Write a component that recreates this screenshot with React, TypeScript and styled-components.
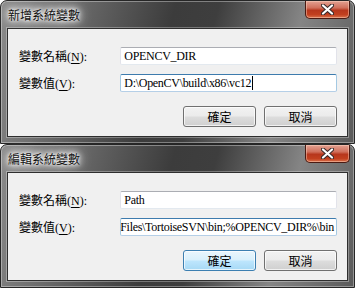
import styled, { createGlobalStyle } from "styled-components";

const GlobalStyle = createGlobalStyle`
  body {
    margin: 0;
    background: #ffffff;
    font-family: "Liberation Serif", "Noto Sans CJK TC", serif;
  }
`

type Field = { label: string; key: string; value: string; focused?: boolean; caret?: boolean; scrolled?: boolean }

type DialogProps = {
  title: string
  fields: Field[]
  defaultFocused?: boolean
}

function CloseIcon() {
  return (
    <svg width="13" height="11" viewBox="0 0 13 11">
      <path d="M2 1.5 L11 9.5 M11 1.5 L2 9.5" stroke="#3a2a2a" strokeWidth="4.2" strokeLinecap="round" />
      <path d="M2 1.5 L11 9.5 M11 1.5 L2 9.5" stroke="#ffffff" strokeWidth="2.2" strokeLinecap="round" />
    </svg>
  )
}

function Dialog({ title, fields, defaultFocused }: DialogProps) {
  return (
    <Window>
      <TitleBar>
        <Title>{title}</Title>
        <CloseButton><CloseIcon /></CloseButton>
      </TitleBar>
      <Client>
        {fields.map((f) => (
          <Row key={f.key}>
            <Label>
              {f.label}(<u>{f.key}</u>):
            </Label>
            <TextBox $focused={f.focused} $scrolled={f.scrolled}>
              <TextValue>
                {f.value}
                {f.caret && <Caret />}
              </TextValue>
            </TextBox>
          </Row>
        ))}
        <Buttons>
          <Button $default={defaultFocused}>確定</Button>
          <Button>取消</Button>
        </Buttons>
      </Client>
    </Window>
  )
}

export default function App() {
  return (
    <>
      <GlobalStyle />
      <Page>
        <Dialog
          title="新增系統變數"
          fields={[
            { label: "變數名稱", key: "N", value: "OPENCV_DIR" },
            { label: "變數值", key: "V", value: "D:\\OpenCV\\build\\x86\\vc12", focused: true, caret: true },
          ]}
        />
        <Dialog
          title="編輯系統變數"
          defaultFocused
          fields={[
            { label: "變數名稱", key: "N", value: "Path" },
            { label: "變數值", key: "V", value: "Files\\TortoiseSVN\\bin;%OPENCV_DIR%\\bin", focused: true, scrolled: true },
          ]}
        />
      </Page>
    </>
  )
}

const Page = styled.div`
  display: flex;
  flex-direction: column;
  width: 357px;
  height: 289px;
  overflow: hidden;
`

const Window = styled.div`
  width: 355px;
  height: 144px;
  box-sizing: border-box;
  flex-shrink: 0;
  border: 1px solid #262626;
  border-radius: 7px 7px 0 0;
  background: linear-gradient(105deg, #8c8c8c 0%, #6e6e6e 18%, #3c3c3c 45%, #3e3e3e 56%, #858585 78%, #5a5a5a 100%);
  box-shadow: inset 0 0 0 1px rgba(255, 255, 255, 0.35);
  display: flex;
  flex-direction: column;
`

const TitleBar = styled.div`
  height: 27px;
  display: flex;
  justify-content: space-between;
  align-items: flex-start;
  padding-left: 7px;
  padding-right: 4px;
`

const Title = styled.div`
  margin-top: 7px;
  font-family: "Noto Sans CJK TC", sans-serif;
  font-size: 12px;
  line-height: 14px;
  color: #111;
  text-shadow: 0 0 3px #fff, 0 0 6px #fff, 0 0 10px #fff, 0 0 14px rgba(255, 255, 255, 0.9);
`

const CloseButton = styled.div`
  width: 45px;
  height: 18px;
  box-sizing: border-box;
  border: 1px solid #4a1a12;
  border-top: none;
  border-radius: 0 0 5px 5px;
  background: linear-gradient(180deg, #e3a192 0%, #d0705c 40%, #b7361c 55%, #c2401f 80%, #d9714c 100%);
  box-shadow: inset 0 0 0 1px rgba(255, 220, 200, 0.45);
  display: flex;
  align-items: center;
  justify-content: center;
`

const Client = styled.div`
  flex: 1;
  margin: 0 6px 6px 6px;
  border: 1px solid #2e2e2e;
  box-shadow: 0 0 0 1px rgba(255, 255, 255, 0.3);
  background: #f0f0f0;
  display: flex;
  flex-direction: column;
  gap: 9px;
  padding: 18px 10px 0 11px;
`

const Row = styled.div`
  display: flex;
  align-items: center;
  height: 18px;
`

const Label = styled.div`
  width: 102px;
  font-size: 12px;
  color: #000;
  u {
    text-decoration-thickness: 1px;
    text-underline-offset: 2px;
  }
`

const TextBox = styled.div<{ $focused?: boolean; $scrolled?: boolean }>`
  width: 218px;
  height: 18px;
  box-sizing: border-box;
  background: #fff;
  border: 1px solid ${(p) => (p.$focused ? "#a4c9e3" : "#e2e3ea")};
  border-top-color: ${(p) => (p.$focused ? "#3d7bad" : "#abadb3")};
  border-bottom-color: ${(p) => (p.$focused ? "#b5cfe7" : "#e3e9ef")};
  border-radius: 2px;
  display: flex;
  align-items: center;
  justify-content: ${(p) => (p.$scrolled ? "flex-end" : "flex-start")};
  overflow: hidden;
  padding: 0 2px 0 3px;
`

const TextValue = styled.span`
  font-family: "Liberation Serif", serif;
  font-size: 12px;
  letter-spacing: -0.3px;
  line-height: 16px;
  color: #000;
  white-space: nowrap;
  display: flex;
  align-items: center;
  flex-shrink: 0;
`

const Caret = styled.span`
  display: inline-block;
  width: 1px;
  height: 14px;
  background: #000;
  margin-left: 1px;
`

const Buttons = styled.div`
  display: flex;
  justify-content: flex-end;
  gap: 8px;
  margin-top: 5px;
`

const Button = styled.div<{ $default?: boolean }>`
  width: 73px;
  height: 21px;
  box-sizing: border-box;
  border: 1px solid ${(p) => (p.$default ? "#3c7fb1" : "#707070")};
  border-radius: 3px;
  background: ${(p) =>
    p.$default
      ? "linear-gradient(180deg, #eaf6fd 0%, #d9f0fc 48%, #bee6fd 52%, #a7d9f5 100%)"
      : "linear-gradient(180deg, #f2f2f2 0%, #ebebeb 48%, #dddddd 52%, #cfcfcf 100%)"};
  box-shadow: inset 0 0 0 1px rgba(255, 255, 255, 0.7);
  font-family: "Noto Sans CJK TC", sans-serif;
  font-size: 12px;
  color: #000;
  display: flex;
  align-items: center;
  justify-content: center;
`
